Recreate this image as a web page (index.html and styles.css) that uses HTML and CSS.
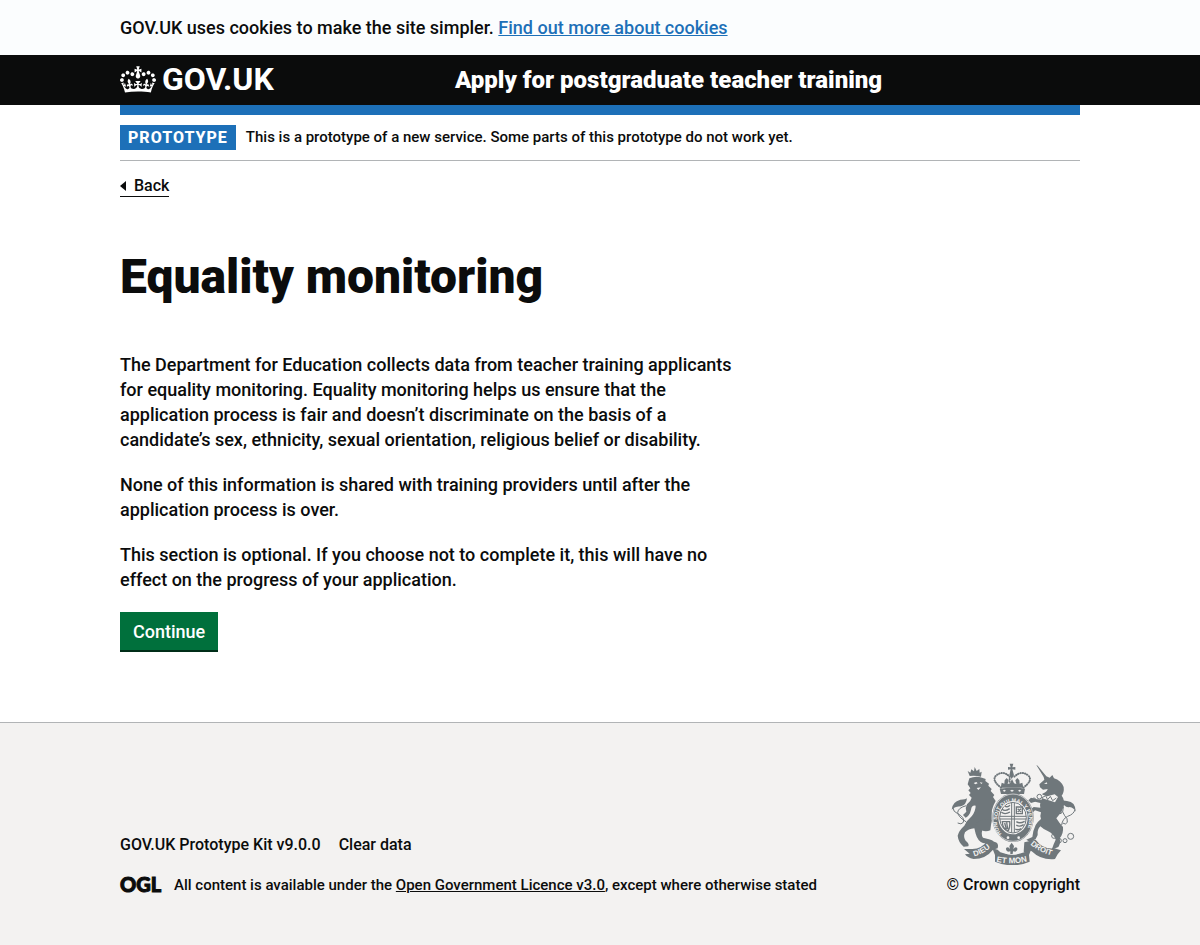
FILE: index.html
```html
<!DOCTYPE html>
<html lang="en">
<head>
<meta charset="utf-8">
<meta name="viewport" content="width=device-width, initial-scale=1">
<title>Equality monitoring - Apply for postgraduate teacher training</title>
<link rel="stylesheet" href="styles.css">
</head>
<body>
<div class="cookie-message">
  <p class="container">GOV.UK uses cookies to make the site simpler. <a class="link" href="#cookies">Find out more about cookies</a></p>
</div>
<header class="header">
  <div class="container header-inner">
    <div class="header-logo">
      <a class="logo-link" href="#home">
        <svg class="crown" viewBox="0 0 132 97" aria-hidden="true"><path fill="currentColor" fill-rule="evenodd" d="M25 30.2c3.5 1.5 7.7-.2 9.1-3.7 1.5-3.6-.2-7.8-3.9-9.2-3.6-1.4-7.6.3-9.1 3.9-1.4 3.5.3 7.5 3.9 9zM9 39.5c3.6 1.5 7.8-.2 9.2-3.7 1.5-3.6-.2-7.8-3.9-9.1-3.6-1.5-7.6.2-9.1 3.8-1.4 3.5.3 7.5 3.8 9zM4.4 57.2c3.5 1.5 7.7-.2 9.1-3.8 1.5-3.6-.2-7.7-3.9-9.1-3.5-1.5-7.6.3-9.1 3.8-1.4 3.5.3 7.6 3.9 9.1zm38.3-21.4c3.5 1.5 7.7-.2 9.1-3.8 1.5-3.6-.2-7.7-3.9-9.1-3.6-1.5-7.6.3-9.1 3.8-1.3 3.6.4 7.7 3.9 9.1zm64.4-5.6c-3.6 1.5-7.8-.2-9.1-3.7-1.5-3.6.2-7.8 3.8-9.2 3.6-1.4 7.7.3 9.2 3.9 1.3 3.5-.4 7.5-3.9 9zm15.9 9.3c-3.6 1.5-7.7-.2-9.1-3.7-1.5-3.6.2-7.8 3.7-9.1 3.6-1.5 7.7.2 9.2 3.8 1.5 3.5-.3 7.5-3.8 9zm4.7 17.7c-3.6 1.5-7.8-.2-9.2-3.8-1.5-3.6.2-7.7 3.9-9.1 3.6-1.5 7.7.3 9.2 3.8 1.3 3.5-.4 7.6-3.9 9.1zM89.3 35.8c-3.6 1.5-7.8-.2-9.2-3.8-1.4-3.6.2-7.7 3.9-9.1 3.6-1.5 7.7.3 9.2 3.8 1.4 3.6-.3 7.7-3.9 9.1zM69.7 17.7l8.9 4.7V9.3l-8.9 2.8c-.2-.3-.5-.6-.9-.9L72.4 0H59.6l3.5 11.2c-.3.3-.6.5-.9.9l-8.8-2.8v13.1l8.8-4.7c.3.3.6.7.9.9l-5 15.4v.1c-.2.8-.4 1.6-.4 2.4 0 4.1 3.1 7.5 7 8.1h.2c.3 0 .7.1 1 .1.4 0 .7 0 1-.1h.2c4-.6 7.1-4.1 7.1-8.1 0-.8-.1-1.7-.4-2.4V34l-5.1-15.4c.4-.2.7-.6 1-.9zM66 92.8c16.9 0 32.8 1.1 47.1 3.2 4-16.9 8.9-26.7 14-33.5l-9.6-3.4c1 4.9 1.1 7.2 0 10.2-1.5-1.4-3-4.3-4.2-8.7L108.6 76c2.8-2 5-3.2 7.5-3.3-4.4 9.4-10 11.9-13.6 11.2-4.3-.8-6.3-4.6-5.6-7.9 1-4.7 5.7-5.9 8-.5 4.3-8.7-3-11.4-7.6-8.8 7.1-7.2 7.9-13.5 2.1-21.1-8 6.1-8.1 12.3-4.5 20.8-4.7-5.4-12.1-2.5-9.5 6.2 3.4-5.2 7.9-2 7.2 3.1-.6 4.3-6.4 7.8-13.5 7.2-10.3-.9-10.9-8-11.2-13.8 2.5-.5 7.1 1.8 11 7.3L80.2 60c-4.1 4.4-8 5.3-12.3 5.4 1.4-4.4 8-11.6 8-11.6H55.5s6.4 7.2 7.9 11.6c-4.2-.1-8-1-12.3-5.4l1.4 16.4c3.9-5.5 8.5-7.7 10.9-7.3-.3 5.8-.9 12.8-11.1 13.8-7.2.6-12.9-2.9-13.5-7.2-.7-5 3.8-8.3 7.1-3.1 2.7-8.7-4.6-11.6-9.4-6.2 3.7-8.5 3.6-14.7-4.6-20.8-5.8 7.6-5 13.9 2.2 21.1-4.7-2.6-11.9.1-7.7 8.8 2.3-5.5 7.1-4.2 8.1.5.7 3.3-1.3 7.1-5.7 7.9-3.5.7-9-1.8-13.5-11.2 2.5.1 4.7 1.3 7.5 3.3l-4.7-15.4c-1.2 4.4-2.7 7.2-4.3 8.7-1.1-3-.9-5.3 0-10.2l-9.5 3.4c5 6.9 9.9 16.7 14 33.5 14.8-2.1 30.8-3.2 47.7-3.2z"/></svg>
        <span>GOV.UK</span>
      </a>
    </div>
    <a class="service-name" href="#service">Apply for postgraduate teacher training</a>
  </div>
</header>
<div class="container page">
  <div class="phase-banner">
    <strong class="tag">PROTOTYPE</strong>
    <span>This is a prototype of a new service. Some parts of this prototype do not work yet.</span>
  </div>
  <a class="back-link" href="#back">Back</a>
  <main class="main">
    <h1 class="heading">Equality monitoring</h1>
    <div class="copy">
      <p>The Department for Education collects data from teacher training applicants for equality monitoring. Equality monitoring helps us ensure that the application process is fair and doesn’t discriminate on the basis of a candidate’s sex, ethnicity, sexual orientation, religious belief or disability.</p>
      <p>None of this information is shared with training providers until after the application process is over.</p>
      <p>This section is optional. If you choose not to complete it, this will have no effect on the progress of your application.</p>
    </div>
    <button class="button" type="button">Continue</button>
  </main>
</div>
<footer class="footer">
  <div class="container footer-inner">
    <div class="footer-meta">
      <ul class="footer-links">
        <li><a href="#kit">GOV.UK Prototype Kit v9.0.0</a></li>
        <li><a href="#clear">Clear data</a></li>
      </ul>
      <div class="licence">
        <svg class="ogl" viewBox="0 0 41 18" role="img" aria-label="Open Government Licence"><text x="0" y="16">OGL</text></svg>
        <span>All content is available under the <a class="licence-link" href="#licence">Open Government Licence v3.0</a>, except where otherwise stated</span>
      </div>
    </div>
    <a class="copyright" href="#copyright">
      <svg class="crest" viewBox="36 24 375 306" aria-hidden="true">
        <defs>
          <path id="garter-path" d="M189 238A48 56 0 1 1 255 238"/>
          <path id="dieu-path" d="M106 304Q136 296 164 269"/>
          <path id="droit-path" d="M274 268Q302 294 348 304"/>
          <path id="mon-path" d="M172 320Q220 331 270 318"/>
        </defs>
        <g class="ink">
          <path d="M92 63L86 48l8 5 3-10 8 6 2-13 6 12 8-6 1 11 6-3-2 15q-17-4-34-2z"/>
          <path d="M91 70Q110 62 129 68L140 72L139 78L150 86L148 92L158 102L155 108L166 120L162 126L170 138L164 150Q156 166 158 182Q160 208 148 214L132 222Q124 236 132 248L150 253Q166 256 164 265L150 267L132 264Q116 258 110 236L106 220Q88 222 78 232Q72 246 80 257Q92 266 88 274L74 275Q58 262 56 242Q60 226 76 212Q84 196 98 184Q110 168 110 152Q98 150 96 164Q92 182 80 188L72 180L82 170Q78 158 84 148Q96 138 98 128L90 120L95 114L88 106L94 100L86 88Z"/>
          <path d="M110 208Q128 188 158 196L154 226Q140 232 128 226z"/>
          <path d="M38 164Q40 140 64 134Q80 134 84 130Q82 150 66 154Q50 154 38 164z"/>
          <path d="M292 30L296 32L322 64L332 68L340 60L345 70Q366 76 374 96Q376 112 368 122Q378 134 374 156Q366 176 352 190Q362 206 372 216Q374 236 362 250Q366 264 358 276L338 284L344 268L350 254Q344 236 326 228Q312 222 304 214Q294 224 296 240L290 252L274 262L262 254L280 246Q282 226 290 210Q296 200 306 192Q302 184 306 172L288 166L276 178L270 190L262 182L274 164L284 156L304 158Q302 150 304 144L288 140L276 144L268 136L276 128L290 132L308 134L310 116Q324 112 326 102L312 104L303 97L301 88L316 74L314 66Z"/>
          <path d="M410 170Q410 140 384 138L366 136Q376 160 392 156Q404 158 410 170z"/>
          <path d="M75 282L100 282Q128 282 148 254L170 262Q180 266 176 280L162 284Q140 312 104 312Q84 308 78 298L92 296z"/>
          <path d="M256 262L290 254Q312 284 346 280L366 286L356 298L348 312Q306 316 280 290Q270 282 268 298L254 290z"/>
          <path d="M160 280L176 284L184 292Q220 306 256 292L262 284L278 280L270 300L272 320Q220 342 168 320L168 300z"/>
          <path d="M215 37l-3-11h11l-3 11 9-1v8l-9-1 5 18-7 11-7-11 4-18-8 1v-8z"/>
          <path d="M182 101q38-6 76 0l-3 16h-69z"/>
          <ellipse cx="222" cy="188" rx="62" ry="73"/>
        </g>
        <g class="paper">
          <path d="M104 84l8-3 4 4-7 3zM122 82l9 1-4 4zM113 99l13-2-8 8zM315 86l8-4 2 5z"/>
          <path d="M307 118l18 6 22-6 10 8-9 16-38-12z"/>
          <path d="M191 107l5-3 5 3-5 3zM213 107l6-3 6 3-6 3zM237 107l5-3 5 3-5 3z"/>
          <circle cx="207" cy="248" r="4"/><circle cx="239" cy="248" r="4"/>
        </g>
        <g class="ink-line thin">
          <path d="M42 158q0 12 14 18 22 11 17 26-6 8-17 2M82 152q-24 6-26 20 2 14 22 26 12 8 4 16"/>
          <path d="M408 164q-4 14-22 20-16 8-18 26M373 156q-6 16 4 26 10 8 8 20-5 9-14 2"/>
          <circle cx="301" cy="125" r="7"/><circle cx="285" cy="134" r="5"/><circle cx="363" cy="170" r="6"/><circle cx="345" cy="243" r="7"/><circle cx="360" cy="257" r="7"/><circle cx="378" cy="257" r="6"/><circle cx="395" cy="244" r="9"/>
          <path d="M309 128l11-6 6 12 8-10 7 13 11-8"/>
        </g>
        <path class="beads" d="M186 98Q156 75 172 61q20-16 40 4v17M253 98q31-23 14-37-20-16-41 4"/>
        <path class="ink" d="M185 98l3-15 8 3 1-10 6-7 6 7-3 11 7-2 6-13 6 13 7 2-3-11 6-7 6 7 1 10 8-3 3 15z"/>
        <ellipse class="paper-line" cx="222" cy="188" rx="60" ry="71"/>
        <ellipse class="paper" cx="222" cy="188" rx="44" ry="50"/>
        <g class="ink-line quarter">
          <ellipse cx="222" cy="188" rx="40" ry="46"/>
          <path d="M218 143v90M226 143v90M182 184h80M182 192h80"/>
        </g>
        <g class="ink-line lions">
          <path d="M189 162q8 9 23-1M187 172q11 8 26-1M197 152q7 7 16-1M232 210q9 7 22-1M229 222q8 5 18-1M232 200q10 7 25-1"/>
          <path d="M232 156h18v20h-18zM236 161l10 10M246 161l-10 10M190 200q0 23 18 27 6-13 4-27zM197 204l5 18M203 202l3 20"/>
        </g>
        <text class="motto"><textPath href="#garter-path" startOffset="2">HONI SOIT QUI MAL Y PENSE</textPath></text>
        <text class="ribbon-text"><textPath href="#dieu-path">DIEU</textPath></text>
        <text class="ribbon-text"><textPath href="#droit-path">DROIT</textPath></text>
        <text class="ribbon-text large"><textPath href="#mon-path">ET MON</textPath></text>
        <path class="paper" d="M200 262h38v34q-19 5-38 0z"/>
        <path class="ink" d="M218 263l7 10-2 10q5-9 11-5 4 7-5 12l-7-1-1 8h-7v-8l-7 1q-9-5-5-12 7-4 11 5l-2-10z"/>
      </svg>
      <span>© Crown copyright</span>
    </a>
  </div>
</footer>
</body>
</html>
```
FILE: styles.css
```css
* { box-sizing: border-box; }
html { background: #f3f2f1; }
body {
  margin: 0;
  background: #fff;
  color: #0b0c0c;
  font-family: Roboto, "Liberation Sans", sans-serif;
  font-size: 18px;
  font-weight: 500;
  line-height: 25px;
}
p, h1, ul { margin: 0; padding: 0; }
a { color: inherit; text-decoration: none; }
.container { max-width: 960px; margin: 0 auto; }
.cookie-message { background: #fbfdfe; padding: 15px 0; }
.link { color: #1d70b8; text-decoration: underline; }
.header { background: #0b0c0c; color: #fff; }
.header-inner { display: flex; align-items: center; height: 50px; }
.header-logo { display: flex; width: 335px; padding-bottom: 2px; }
.logo-link { display: inline-flex; align-items: center; gap: 6px; font-size: 32px; line-height: 30px; font-weight: 700; }
.crown { width: 36px; height: 27px; }
.service-name { font-size: 24px; font-weight: 900; line-height: 30px; }
.page { border-top: 10px solid #1d70b8; padding-bottom: 70px; }
.phase-banner { display: flex; align-items: center; gap: 10px; padding: 10px 0; border-bottom: 1px solid #b1b4b6; font-size: 15px; }
.tag { background: #1d70b8; color: #fff; padding: 0 8px; font-size: 16px; font-weight: 800; letter-spacing: 1px; }
.back-link { display: inline-flex; align-items: center; gap: 8px; margin-top: 15px; border-bottom: 1px solid #0b0c0c; font-size: 16px; line-height: 20px; }
.back-link::before { content: ""; border: 5px solid transparent; border-left: 0; border-right: 6px solid #0b0c0c; }
.main { display: flex; flex-direction: column; align-items: flex-start; padding-top: 55px; }
.heading { font-size: 48px; line-height: 50px; font-weight: 900; margin-bottom: 50px; }
.copy { max-width: 630px; display: grid; gap: 20px; }
.button { margin-top: 20px; padding: 7px 13px 6px; border: 0; border-bottom: 2px solid #002d18; background: #00703c; color: #fff; font: inherit; }
.footer { border-top: 1px solid #b1b4b6; background: #f3f2f1; padding: 40px 0; font-size: 16px; line-height: 20px; }
.footer-inner { display: flex; justify-content: space-between; align-items: flex-end; }
.footer-links { display: flex; gap: 18px; list-style: none; margin-bottom: 20px; }
.licence { display: flex; align-items: center; gap: 13px; font-size: 15px; }
.licence-link { text-decoration: underline; }
.ogl { width: 41px; height: 18px; overflow: visible; fill: #0b0c0c; font-family: Lato, sans-serif; font-size: 20px; font-weight: 900; stroke: #0b0c0c; stroke-width: 1; }
.copyright { display: flex; flex-direction: column; align-items: center; gap: 10px; }
.crest { width: 125px; height: 102px; }
.ink { fill: #6f777b; }
.paper { fill: #f3f2f1; }
.ink-line { fill: none; stroke: #6f777b; stroke-width: 4; }
.thin { stroke-width: 3; }
.quarter { stroke-width: 3; }
.lions { stroke-width: 4; }
.paper-line { fill: none; stroke: #f3f2f1; stroke-width: 2; }
.beads { fill: none; stroke: #6f777b; stroke-width: 6; stroke-linecap: round; stroke-dasharray: 1 6; }
.motto, .ribbon-text { fill: #f3f2f1; font-family: "Liberation Sans", sans-serif; font-weight: 700; font-size: 16px; }
.ribbon-text { font-size: 23px; }
.large { font-size: 24px; }
```
